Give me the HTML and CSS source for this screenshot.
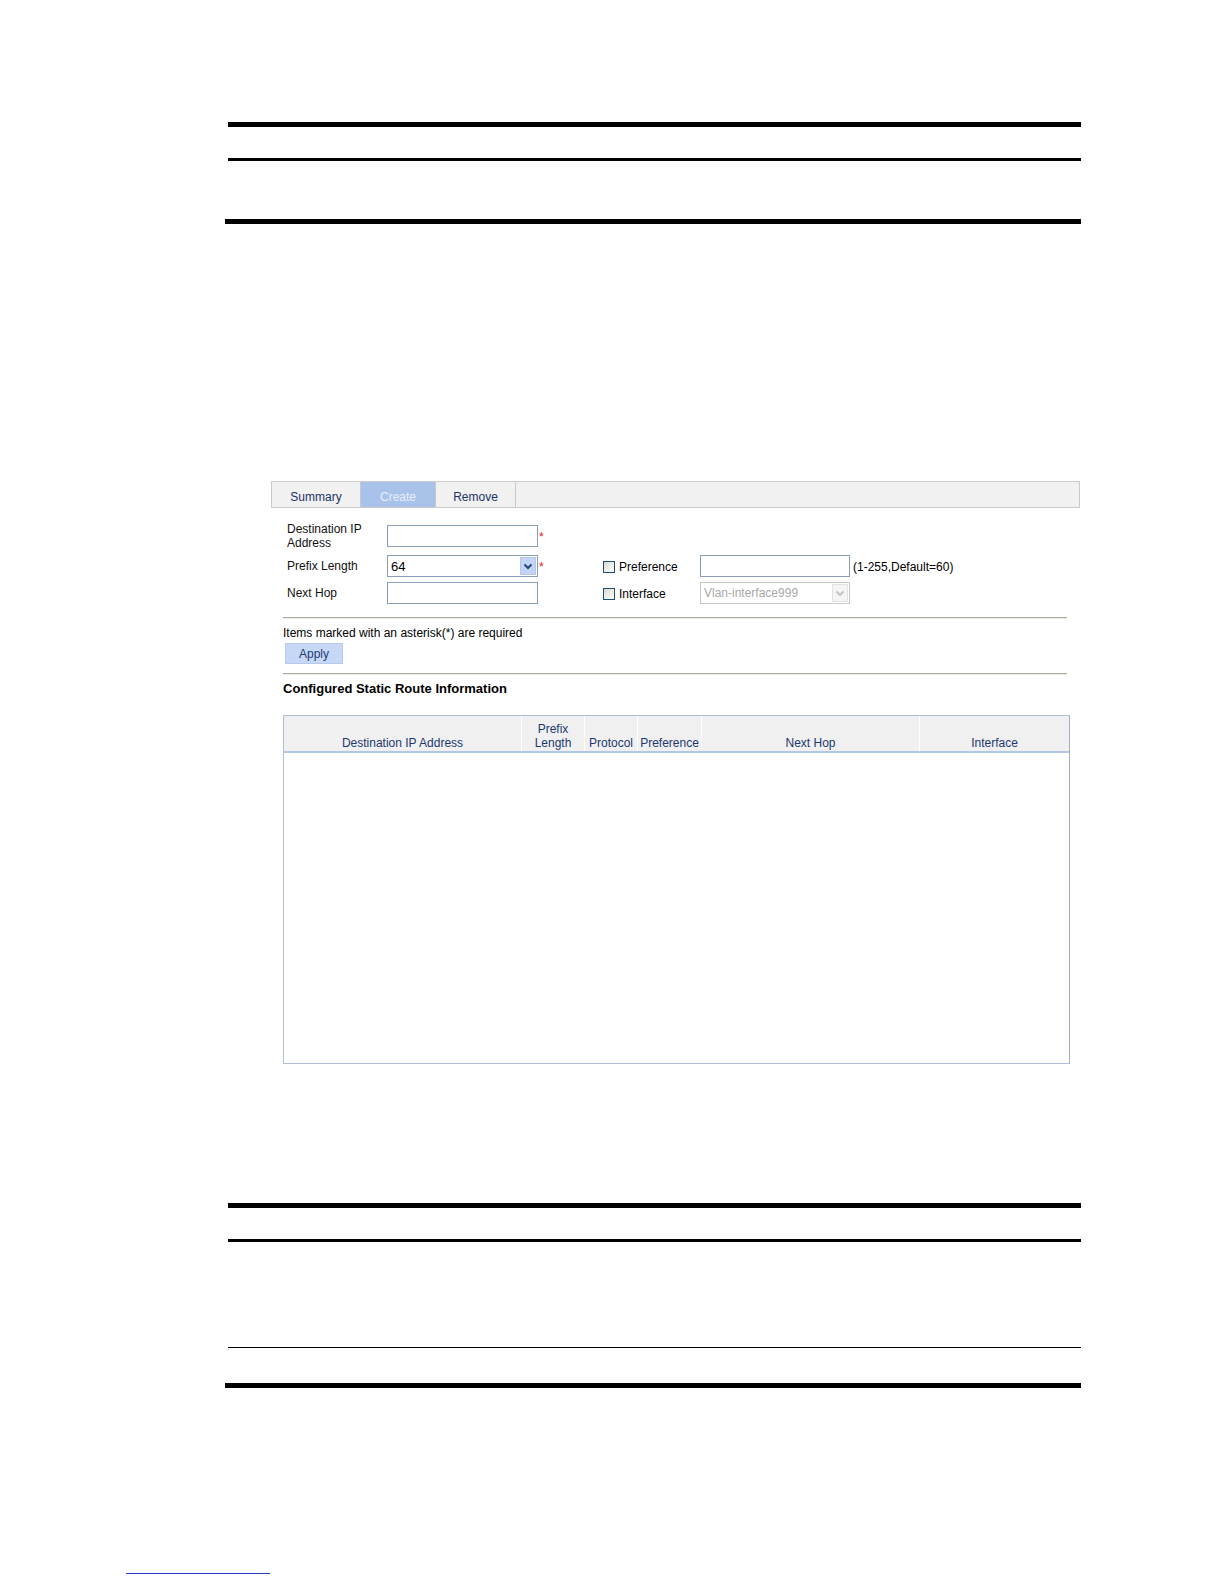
FILE: index.html
```html
<!DOCTYPE html>
<html>
<head>
<meta charset="utf-8">
<title>Static Route Create</title>
<link rel="stylesheet" href="styles.css">
</head>
<body>
<div class="doc">
  <div class="rules">
    <div class="rule thick"></div>
    <div class="rule mid gap31"></div>
    <div class="rule thick wide gap58"></div>
  </div>

  <div class="figure">
    <div class="tabbar">
      <div class="tab t-summary">Summary</div>
      <div class="tab t-create active">Create</div>
      <div class="tab t-remove">Remove</div>
    </div>

    <div class="form">
      <div class="lbl two">Destination IP<br>Address</div>
      <div class="fld"><div class="input"></div></div>
      <div class="star">*</div>
      <div class="empty"></div>
      <div class="empty"></div>
      <div class="empty"></div>

      <div class="lbl">Prefix Length</div>
      <div class="fld">
        <div class="input select"><span class="val">64</span>
          <span class="arrow"><svg width="10" height="7" viewBox="0 0 10 7"><path d="M1.5 1.5l3.5 3.5 3.5-3.5" stroke="#27467e" stroke-width="2" fill="none"/></svg></span>
        </div>
      </div>
      <div class="star">*</div>
      <div class="chk"><span class="box"></span><span>Preference</span></div>
      <div class="fld"><div class="input w150"></div></div>
      <div class="hint">(1-255,Default=60)</div>

      <div class="lbl">Next Hop</div>
      <div class="fld"><div class="input"></div></div>
      <div class="empty"></div>
      <div class="chk"><span class="box"></span><span>Interface</span></div>
      <div class="fld">
        <div class="input select w150 disabled"><span class="val">Vlan-interface999</span>
          <span class="arrow"><svg width="10" height="7" viewBox="0 0 10 7"><path d="M1.5 1.5l3.5 3.5 3.5-3.5" stroke="#c4c4c4" stroke-width="2" fill="none"/></svg></span>
        </div>
      </div>
      <div class="empty"></div>
    </div>

    <div class="inner">
      <div class="sep first"></div>
      <div class="note">Items marked with an asterisk(*) are required</div>
      <div class="btn">Apply</div>
      <div class="sep second"></div>
      <div class="heading">Configured Static Route Information</div>

      <div class="rtable">
        <div class="thead">
          <div class="th">Destination IP Address</div>
          <div class="th">Prefix<br>Length</div>
          <div class="th">Protocol</div>
          <div class="th">Preference</div>
          <div class="th">Next Hop</div>
          <div class="th last">Interface</div>
        </div>
        <div class="tbody"></div>
      </div>
    </div>
  </div>

  <div class="rules bottom">
    <div class="rule thick"></div>
    <div class="rule mid gap31"></div>
    <div class="rule thin gap105"></div>
    <div class="rule thick wide gap35"></div>
  </div>

  <div class="footlink"></div>
</div>
</body>
</html>
```

FILE: styles.css
```css
html, body {
  margin: 0;
  padding: 0;
  background: #ffffff;
}
body {
  font-family: "Liberation Sans", Arial, sans-serif;
  font-size: 12px;
  color: #000;
}
.doc {
  padding-top: 122px;
}

/* document rules */
.rule {
  background: #000;
  margin-left: 228px;
  width: 853px;
}
.rule.thick { height: 5px; }
.rule.mid { height: 3px; }
.rule.thin { height: 1px; }
.rule.wide { margin-left: 225px; width: 856px; }
.gap31 { margin-top: 31px; }
.gap58 { margin-top: 58px; }
.gap105 { margin-top: 105px; }
.gap35 { margin-top: 35px; }

/* figure */
.figure {
  margin-top: 257px;
  margin-left: 271px;
  width: 809px;
}
.tabbar {
  display: flex;
  height: 25px;
  border: 1px solid #cacaca;
  background: #f1f1f1;
}
.tab {
  display: flex;
  align-items: center;
  justify-content: center;
  padding-top: 4px;
  box-sizing: border-box;
  border-right: 1px solid #c9c9c9;
  color: #1b3367;
}
.t-summary { width: 89px; }
.t-create { width: 75px; }
.t-remove { width: 80px; }
.tab.active {
  background: #a8c2ea;
  color: #e9eff9;
}

/* form */
.form {
  display: grid;
  grid-template-columns: 100px 151px 65px 97px 150px auto;
  grid-template-rows: 28px 26px 22px;
  row-gap: 3px;
  align-items: center;
  padding: 14px 0 0 16px;
}
.lbl { line-height: 14px; color: #111; }
.fld { display: flex; }
.input {
  box-sizing: border-box;
  width: 151px;
  height: 22px;
  border: 1px solid #8c9db6;
  background: #fff;
  position: relative;
  display: flex;
  align-items: center;
}
.input.w150 { width: 150px; }
.select .val { padding-left: 3px; font-size: 13px; color: #000; }
.select .arrow {
  position: absolute;
  right: 1px;
  top: 1px;
  bottom: 1px;
  width: 16px;
  box-sizing: border-box;
  background: #c4d4f6;
  border: 1px solid #b3c6ee;
  display: flex;
  align-items: center;
  justify-content: center;
}
.select.disabled { border-color: #c8c8c8; }
.select.disabled .val { color: #a8a8a8; font-size: 12px; }
.select.disabled .arrow { background: #f4f4f4; border-color: #e2e2e2; }
.star {
  color: #e01818;
  font-size: 12px;
  line-height: 14px;
  padding-left: 1px;
  padding-top: 2px;
}
.chk {
  display: flex;
  align-items: center;
  gap: 4px;
  padding-top: 1px;
}
.chk .box {
  width: 10px;
  height: 10px;
  border: 1px solid #1d4d78;
  background: linear-gradient(135deg, #d9d9d2 0%, #f4f4f0 70%, #ffffff 100%);
}
.hint { padding-left: 3px; padding-top: 2px; }

/* lower part */
.inner { margin-left: 12px; }
.sep {
  width: 784px;
  height: 1px;
  background: #abad95;
  border-bottom: 1px solid #ececE4;
}
.sep.first { margin-top: 13px; }
.note { margin-top: 7px; line-height: 14px; }
.btn {
  margin-top: 3px;
  margin-left: 2px;
  width: 58px;
  height: 21px;
  box-sizing: border-box;
  background: #c6d8f5;
  border: 1px solid #b5cbee;
  color: #1d3b74;
  display: flex;
  align-items: center;
  justify-content: center;
  padding-top: 1px;
}
.sep.second { margin-top: 9px; }
.heading {
  margin-top: 6px;
  line-height: 16px;
  font-size: 13px;
  font-weight: bold;
}

.rtable {
  margin-top: 18px;
  width: 787px;
  height: 349px;
  box-sizing: border-box;
  border: 1px solid #aebdd9;
  border-right-color: #a2acca;
  display: flex;
  flex-direction: column;
}
.thead {
  display: grid;
  grid-template-columns: 238px 63px 53px 64px 218px 1fr;
  height: 35px;
  background: #f0f0f0;
  border-bottom: 2px solid #b2c6e6;
}
.th {
  border-right: 1px solid #ffffff;
  display: flex;
  flex-direction: column;
  justify-content: flex-end;
  align-items: center;
  text-align: center;
  line-height: 14px;
  padding-bottom: 1px;
  color: #1c3870;
}
.th.last { border-right: none; }
.tbody { flex: 1; background: #fff; }

.rules.bottom { margin-top: 139px; }

.footlink {
  margin-top: 185px;
  margin-left: 126px;
  width: 144px;
  height: 1px;
  background: #2a3cc8;
}
```
